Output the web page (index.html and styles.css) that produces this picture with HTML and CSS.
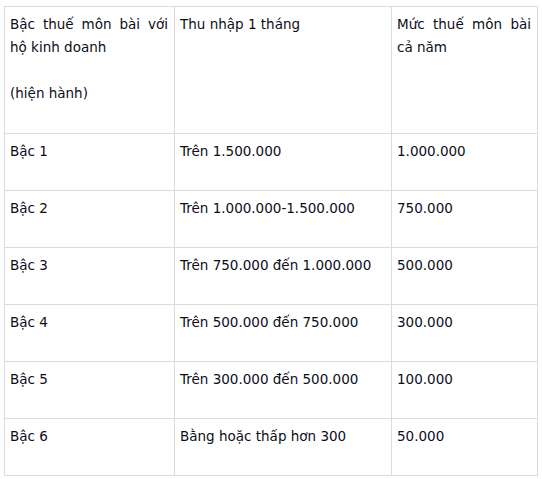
FILE: index.html
```html
<!DOCTYPE html>
<html lang="vi">
<head>
<meta charset="utf-8">
<link rel="stylesheet" href="styles.css">
</head>
<body>
<table class="tax">
  <colgroup>
    <col class="c1"><col class="c2"><col class="c3">
  </colgroup>
  <tr class="head">
    <td><p class="just">Bậc thuế môn bài với hộ kinh doanh</p><p class="gap">(hiện hành)</p></td>
    <td><p>Thu nhập 1 tháng</p></td>
    <td><p class="just">Mức thuế môn bài cả năm</p></td>
  </tr>
  <tr><td>Bậc 1</td><td>Trên 1.500.000</td><td>1.000.000</td></tr>
  <tr><td>Bậc 2</td><td>Trên 1.000.000-1.500.000</td><td>750.000</td></tr>
  <tr><td>Bậc 3</td><td>Trên 750.000 đến 1.000.000</td><td>500.000</td></tr>
  <tr><td>Bậc 4</td><td>Trên 500.000 đến 750.000</td><td>300.000</td></tr>
  <tr><td>Bậc 5</td><td>Trên 300.000 đến 500.000</td><td>100.000</td></tr>
  <tr><td>Bậc 6</td><td>Bằng hoặc thấp hơn 300</td><td>50.000</td></tr>
</table>
</body>
</html>
```

FILE: styles.css
```css
html, body {
  margin: 0;
  padding: 0;
  background: #fff;
}
body {
  font-family: "DejaVu Sans", Verdana, sans-serif;
  font-size: 13.5px;
  line-height: 23px;
  color: #0d0d1a;
}
.tax {
  border-collapse: collapse;
  margin: 6px 0 0 4px;
  width: 533px;
  table-layout: fixed;
}
.c1 { width: 170px; }
.c2 { width: 217px; }
.c3 { width: 146px; }
.tax td {
  border: 1px solid #dcdcdc;
  vertical-align: top;
  padding: 6px 6px 0 5px;
  height: 50px;
}
.tax .head td {
  height: 120px;
}
.tax p {
  margin: 0;
}
.tax p.just {
  text-align: justify;
}
.tax p.gap {
  margin-top: 23px;
}
```
